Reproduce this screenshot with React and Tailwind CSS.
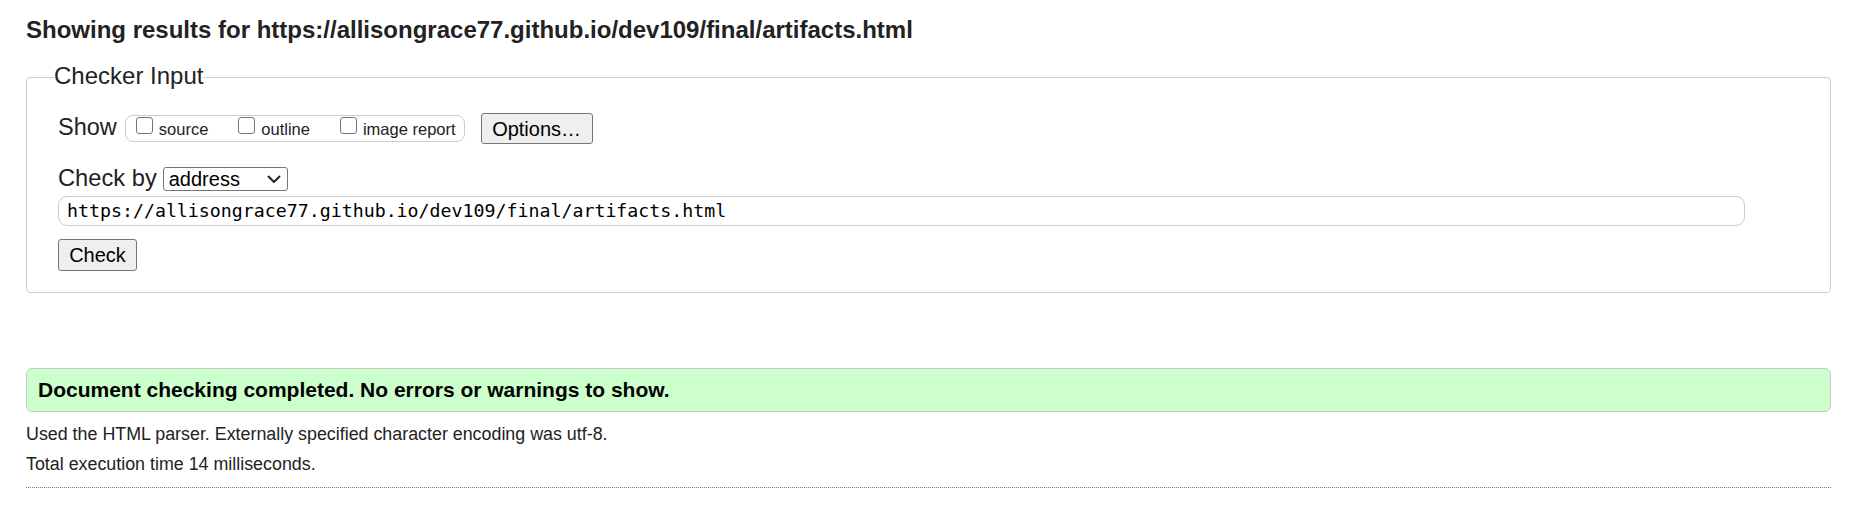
export default function App() {
  const sans = { fontFamily: '"Liberation Sans", Arial, sans-serif' };
  const url = "https://allisongrace77.github.io/dev109/final/artifacts.html";

  return (
    <div className="min-h-screen bg-white text-[#222] pl-[26px] pr-[24px] pt-[16px]" style={sans}>
      <h2 className="text-[24px] font-bold leading-[28px]">Showing results for {url}</h2>

      <fieldset className="mt-[19px] border border-[#ccc] rounded-[4px] pl-[31px] pb-[21px]">
        <legend className="ml-[-4px] text-[24px] leading-[28px]">
          <span className="relative -top-[1px]">Checker Input</span>
        </legend>

        <div className="mt-[22px] flex items-start">
          <span className="text-[23.5px] leading-[28px]">Show</span>
          <div className="ml-[8px] mt-[2px] h-[27px] flex items-start border border-[#ccc] rounded-[8px] pl-[10px] pr-[8px]">
            <input type="checkbox" className="appearance-none mt-[1px] w-[17px] h-[17px] border border-[#767676] rounded-[3px] bg-white" />
            <span className="ml-[6px] mt-[3px] text-[16.5px] leading-[20px]">source</span>
            <input type="checkbox" className="appearance-none ml-[30px] mt-[1px] w-[17px] h-[17px] border border-[#767676] rounded-[3px] bg-white" />
            <span className="ml-[6px] mt-[3px] text-[16.5px] leading-[20px]">outline</span>
            <input type="checkbox" className="appearance-none ml-[30px] mt-[1px] w-[17px] h-[17px] border border-[#767676] rounded-[3px] bg-white" />
            <span className="ml-[6px] mt-[3px] text-[16.5px] leading-[20px]">image report</span>
          </div>
          <button className="ml-[16px] w-[112px] h-[31px] bg-[#efefef] border border-[#767676] rounded-[3px] text-[20px] leading-[24px] text-black">
            Options…
          </button>
        </div>

        <div className="mt-[20px] flex items-start">
          <span className="text-[23.7px] leading-[28px]">Check by</span>
          <div className="ml-[6px] mt-[3px] w-[125px] h-[24px] flex items-center justify-between border border-[#767676] rounded-[3px] bg-white pl-[5px] pr-[6px]">
            <span className="text-[20px] leading-[22px] text-black">address</span>
            <svg width="14" height="8" viewBox="0 0 14 8" fill="none">
              <path d="M1 1 L7 7 L13 1" stroke="#222" strokeWidth="2" />
            </svg>
          </div>
        </div>

        <div className="mt-[4px] mr-[85px] h-[30px] flex items-center border border-[#ccc] rounded-[9px] pl-[8px]">
          <span className="text-[18.25px] leading-[22px] text-black" style={{ fontFamily: '"DejaVu Sans Mono", "Liberation Mono", monospace' }}>
            {url}
          </span>
        </div>

        <button className="mt-[13px] w-[79px] h-[32px] bg-[#efefef] border border-[#767676] rounded-[3px] text-[20px] leading-[24px] text-black">
          Check
        </button>
      </fieldset>

      <div className="mt-[75px] h-[44px] flex items-center bg-[#ccffcc] border border-[#c8c8c8] rounded-[6px] pl-[11px]">
        <span className="text-[21px] font-bold leading-[24px] text-black">
          Document checking completed. No errors or warnings to show.
        </span>
      </div>

      <p className="mt-[11px] text-[17.85px] leading-[22px]">
        Used the HTML parser. Externally specified character encoding was utf-8.
      </p>
      <p className="mt-[8px] text-[17.85px] leading-[22px]">Total execution time 14 milliseconds.</p>

      <div className="mt-[12px] border-t border-dotted border-[#777]" />
    </div>
  );
}
